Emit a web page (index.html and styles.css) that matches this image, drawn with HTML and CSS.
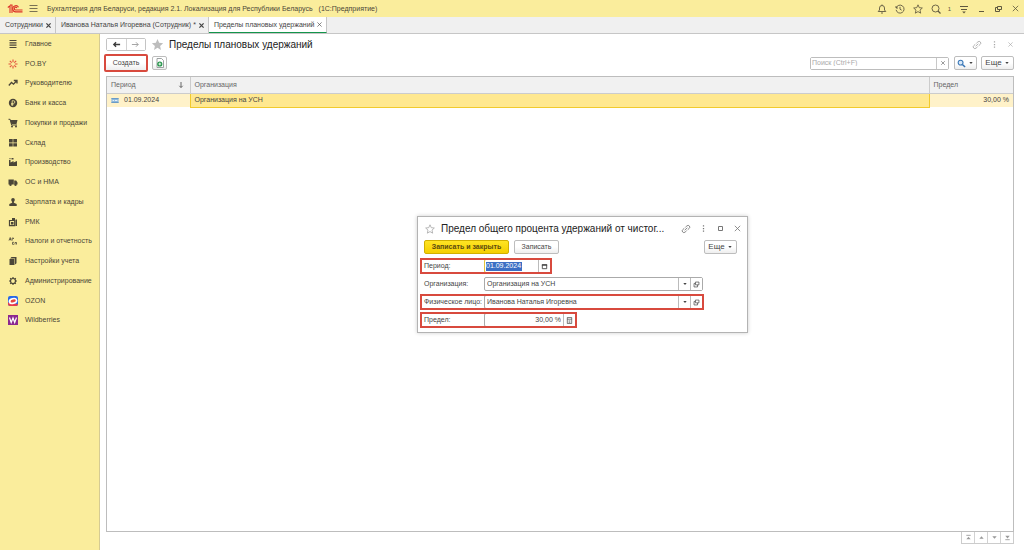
FILE: index.html
```html
<!DOCTYPE html>
<html lang="ru">
<head>
<meta charset="utf-8">
<title>Пределы плановых удержаний</title>
<link rel="stylesheet" href="styles.css">
</head>
<body>
<svg class="defs" aria-hidden="true">
  <symbol id="link" viewBox="0 0 10 10"><g transform="rotate(-42 5 5)" fill="none" stroke="currentColor" stroke-width=".8"><path d="M4.300 3.300H2.200a1.700 1.700 0 0 0 0 3.400h2.100M5.700 3.300h2.100a1.700 1.700 0 0 1 0 3.400H5.700M3.200 5h3.600"/></g></symbol>
  <symbol id="dots" viewBox="0 0 10 10"><path d="M4.300 1.500h1.400v1.400H4.300zM4.300 4.400h1.400v1.400H4.300zM4.300 7.300h1.400v1.400H4.300z" fill="currentColor"/></symbol>
  <symbol id="cross" viewBox="0 0 10 10"><path d="M2 2l6 6M8 2l-6 6" stroke="currentColor" stroke-width=".9" fill="none"/></symbol>
  <symbol id="bold-cross" viewBox="0 0 10 10"><path d="M2 2l6 6M8 2l-6 6" stroke="currentColor" stroke-width="1.800" fill="none"/></symbol>
  <symbol id="star" viewBox="0 0 12 12"><path d="M6 1l1.500 3.400 3.700.4-2.800 2.500.8 3.700L6 9.100 2.800 11l.8-3.700L.8 4.800l3.700-.4z"/></symbol>
  <symbol id="caret" viewBox="0 0 6 6"><path d="M1.300 2h3.400L3 4z" fill="currentColor"/></symbol>
  <symbol id="open" viewBox="0 0 10 10"><path d="M3.500 1.500h5v4h-5zM3.500 3.500h-2v5h5v-3" fill="none" stroke="currentColor"/></symbol>
</svg>

<header class="topbar">
  <svg class="logo" viewBox="0 0 16 10"><g fill="none" stroke="#dc2f27" stroke-width="1.100"><path d="M.8 3.500L3 1.800V9M5 9V1H3"/><path d="M11.500 3.300A3.100 3.100 0 1 0 9 7.900H15.500M10 4.100A1.400 1.400 0 1 0 9 6H15.500"/></g></svg>
  <button class="plain" aria-label="Меню"><svg class="i9" viewBox="0 0 9 9"><path d="M.5 1.500h8M.5 4.500h8M.5 7.500h8" stroke="#7a7254" fill="none"/></svg></button>
  <span class="app-title">Бухгалтерия для Беларуси, редакция 2.1. Локализация для Республики Беларусь</span>
  <span>(1С:Предприятие)</span>
  <nav class="top-tools">
    <button class="plain" aria-label="Уведомления"><svg class="i10" viewBox="0 0 10 10"><path d="M1.200 7.500h7.600L7.500 6V4a2.500 2.500 0 0 0-5 0v2zM4 9h2M5 .5v1" fill="none" stroke="currentColor" stroke-width=".9"/></svg></button>
    <button class="plain" aria-label="История"><svg class="i10" viewBox="0 0 10 10"><path d="M1 2v2h2M1.200 4a4 4 0 1 1-.1 1.800M5 2.800V5.200l1.700 1" fill="none" stroke="currentColor" stroke-width=".9"/></svg></button>
    <button class="plain" aria-label="Избранное"><svg class="i10 star-line"><use href="#star"/></svg></button>
    <button class="plain search-count" aria-label="Поиск"><svg class="i10" viewBox="0 0 10 10"><circle cx="4.500" cy="4.500" r="3.500" fill="none" stroke="currentColor" stroke-width=".9"/><path d="M7 7l2.500 2.500" stroke="currentColor" stroke-width="1.200"/></svg><small>1</small></button>
    <button class="plain" aria-label="Панель"><svg class="i10" viewBox="0 0 10 10"><path d="M1 2.500h8M2 5.500h6" stroke="currentColor" fill="none"/><path d="M3.200 7.500h3.600L5 9.500z" fill="currentColor"/></svg></button>
    <button class="plain" aria-label="Свернуть"><svg class="i9" viewBox="0 0 9 9"><path d="M2 7.500h5" stroke="currentColor"/></svg></button>
    <button class="plain" aria-label="Восстановить"><svg class="i9" viewBox="0 0 9 9"><path d="M3.500 2.500h4v3h-4zM3.500 3.500h-2v4h4v-2" fill="none" stroke="currentColor"/></svg></button>
    <button class="plain" aria-label="Закрыть"><svg class="i9"><use href="#cross"/></svg></button>
  </nav>
</header>

<nav class="tabs">
  <div class="tab"><a href="#">Сотрудники</a><button class="plain" aria-label="Закрыть вкладку"><svg class="i7"><use href="#bold-cross"/></svg></button></div>
  <div class="tab"><a href="#">Иванова Наталья Игоревна (Сотрудник) *</a><button class="plain" aria-label="Закрыть вкладку"><svg class="i7"><use href="#bold-cross"/></svg></button></div>
  <div class="tab active"><a href="#">Пределы плановых удержаний</a><button class="plain" aria-label="Закрыть вкладку"><svg class="i7"><use href="#cross"/></svg></button></div>
</nav>

<div class="workspace">
  <nav class="sidebar">
    <ul>
      <li><a href="#"><svg viewBox="0 0 10 10"><path d="M1.500 1.500h7M1.500 3.800h7M1.500 6.200h7M1.500 8.500h7" stroke="currentColor" stroke-width="1.200"/></svg>Главное</a></li>
      <li><a href="#"><svg viewBox="0 0 10 10"><path d="M5 .5v2.700M5 6.800v2.700M.5 5h2.700M6.800 5h2.700M1.800 1.800l1.900 1.900M6.300 6.300l1.900 1.900M8.200 1.800L6.300 3.700M3.700 6.300L1.800 8.200" stroke="#e2503a" stroke-width="1.100"/></svg>PO.BY</a></li>
      <li><a href="#"><svg viewBox="0 0 10 10"><path d="M.8 7.500L3.500 4.500l2 1.700L8.500 3M5.800 2.500H9v3" fill="none" stroke="currentColor" stroke-width="1.300"/></svg>Руководителю</a></li>
      <li><a href="#"><svg viewBox="0 0 10 10"><circle cx="5" cy="5" r="4.200" fill="currentColor"/><path d="M4.200 8V2.700h1.300a1.300 1.300 0 0 1 0 2.700H3M3 6.700h2.500" fill="none" stroke="#faed9c" stroke-width=".8"/></svg>Банк и касса</a></li>
      <li><a href="#"><svg viewBox="0 0 10 10"><path d="M.5 1.300h1.600L3.600 7H9" fill="none" stroke="currentColor"/><path d="M2.200 2h7.300L8.500 6H3.300z" fill="currentColor"/><circle cx="4" cy="8.500" r="1" fill="currentColor"/><circle cx="8" cy="8.500" r="1" fill="currentColor"/></svg>Покупки и продажи</a></li>
      <li><a href="#"><svg viewBox="0 0 10 10"><path d="M1 1h3.700v3.500H1zM5.300 1H9v3.500H5.300zM1 5.200h3.700V8.500H1zM5.300 5.200H9V8.500H5.300z" fill="currentColor"/></svg>Склад</a></li>
      <li><a href="#"><svg viewBox="0 0 10 10"><path d="M1 9V3h1.500v2.500L5.500 4v1.500L9 4v5zM1.500 1h1v1.300h-1zM3.500 1h2v1.600h-2z" fill="currentColor"/></svg>Производство</a></li>
      <li><a href="#"><svg viewBox="0 0 10 10"><path d="M.5 2.500h5.300v5H.5zM6.200 3.500h2l1.300 2v2H6.200z" fill="currentColor"/><circle cx="2.500" cy="7.700" r="1.200" fill="currentColor"/><circle cx="7.500" cy="7.700" r="1.200" fill="currentColor"/></svg>ОС и НМА</a></li>
      <li><a href="#"><svg viewBox="0 0 10 10"><path d="M3.200 2.800a1.800 1.800 0 0 1 3.600 0c0 1-.6 1.600-.9 2v.9L8.700 7v2H1.300V7l2.800-1.300v-.9c-.3-.4-.9-1-.9-2z" fill="currentColor"/></svg>Зарплата и кадры</a></li>
      <li><a href="#"><svg viewBox="0 0 10 10"><path d="M1.500 3.500h5.200v5.200H1.500z" fill="none" stroke="currentColor" stroke-width="1.200"/><path d="M3 5h2.500v2.500H3zM4 1h3v2H4zM7.500 2.500H9V9H7.500z" fill="currentColor"/></svg>РМК</a></li>
      <li><a href="#"><svg viewBox="0 0 10 10"><path d="M1 4.500L2.200 1.500l1 3M1.500 3.600h1.500M4.200 4.500V2h1.300v1M4.500 6.300H6M4.500 8.300H6M4.500 6.300v2M7 8.500V6.500h1.500v2" fill="none" stroke="currentColor" stroke-width=".8"/></svg>Налоги и отчетность</a></li>
      <li><a href="#"><svg viewBox="0 0 10 10"><path d="M3.500 1h5v6.200L7 8.500V2.500H2zM1.500 3h5v6h-5z" fill="currentColor"/></svg>Настройки учета</a></li>
      <li><a href="#"><svg viewBox="0 0 10 10"><circle cx="5" cy="5" r="2.500" fill="none" stroke="currentColor" stroke-width="1.200"/><path d="M5 1v1.500M5 7.500V9M1 5h1.500M7.500 5H9M2.200 2.200l1 1M6.800 6.800l1 1M7.800 2.200l-1 1M3.200 6.800l-1 1" stroke="currentColor" stroke-width="1.200"/></svg>Администрирование</a></li>
      <li><a href="#"><svg viewBox="0 0 10 10"><rect width="10" height="10" rx="2" fill="#2868e8"/><path d="M0 6.500V8a2 2 0 0 0 2 2h6a2 2 0 0 0 2-2z" fill="#e83b4b"/><ellipse cx="5" cy="5" rx="4.400" ry="3.100" fill="#fff" transform="rotate(-15 5 5)"/><ellipse cx="5.200" cy="5" rx="2.700" ry="1.400" fill="#e6463c" transform="rotate(-15 5 5)"/></svg>OZON</a></li>
      <li><a href="#"><svg viewBox="0 0 10 10"><rect width="10" height="10" fill="#8c2890"/><path d="M1.500 2.500L3.200 7.500 5 3l1.700 4.500L8.500 2.500" fill="none" stroke="#fff" stroke-width="1.200"/></svg>Wildberries</a></li>
    </ul>
  </nav>

  <main class="page">
    <div class="page-head">
      <div class="history">
        <button aria-label="Назад"><svg class="i9" viewBox="0 0 10 10"><path d="M9 5H2M4.500 2.500L2 5l2.500 2.500" fill="none" stroke="#3c3c3c" stroke-width="1.500"/></svg></button>
        <button aria-label="Вперед"><svg class="i9" viewBox="0 0 10 10"><path d="M1 5h7M5.500 2.500L8 5 5.500 7.500" fill="none" stroke="#a4a4a4" stroke-width="1.100"/></svg></button>
      </div>
      <svg class="i13 star-fill"><use href="#star"/></svg>
      <h1>Пределы плановых удержаний</h1>
      <div class="head-tools">
        <button class="plain" aria-label="Ссылка"><svg class="i10"><use href="#link"/></svg></button>
        <button class="plain" aria-label="Действия"><svg class="i9"><use href="#dots"/></svg></button>
        <button class="plain" aria-label="Закрыть"><svg class="i7"><use href="#cross"/></svg></button>
      </div>
    </div>

    <div class="commands">
      <button class="btn create">Создать</button>
      <button class="btn copy" aria-label="Скопировать"><svg class="i10" viewBox="0 0 10 10"><path d="M2 9.500v-9h4.500l2 2v7z" fill="#fff" stroke="#858b8b" stroke-width=".8"/><circle cx="4.800" cy="6" r="2.600" fill="#229447"/><path d="M4.800 4.600v2.800M3.400 6h2.800" stroke="#fff" stroke-width=".9"/></svg></button>
      <div class="search">
        <input type="text" placeholder="Поиск (Ctrl+F)" aria-label="Поиск">
        <button aria-label="Очистить"><svg class="i6"><use href="#cross"/></svg></button>
      </div>
      <button class="btn find" aria-label="Найти"><svg class="i9" viewBox="0 0 10 10"><circle cx="4" cy="4" r="2.700" fill="#d8e8f8" stroke="#3473b5" stroke-width="1.200"/><path d="M6 6l3 3" stroke="#3473b5" stroke-width="1.600"/></svg><svg class="i6"><use href="#caret"/></svg></button>
      <button class="btn more">Еще<svg class="i6"><use href="#caret"/></svg></button>
    </div>

    <div class="list">
      <table>
        <thead><tr><th class="c-date"><span>Период<svg class="sort" viewBox="0 0 6 8"><path d="M3 1v5.500M1.300 4.800L3 6.500l1.700-1.700" fill="none" stroke="currentColor"/></svg></span></th><th>Организация</th><th class="c-limit">Предел</th></tr></thead>
        <tbody><tr><td><span class="rec"><svg viewBox="0 0 10 8"><rect x=".5" y="1" width="9" height="6" fill="#8db8dc"/><path d="M.5 1.500h9M.5 6.500h9" stroke="#5e92c2"/><path d="M2 4h2M5 4h3" stroke="#fff"/></svg>01.09.2024</span></td><td class="current">Организация на УСН</td><td class="num">30,00 %</td></tr></tbody>
      </table>
    </div>
    <div class="pager">
      <button aria-label="В начало"><svg class="i7" viewBox="0 0 8 8"><path d="M1.500 1.500h5" stroke="currentColor"/><path d="M1.500 6L4 3l2.500 3z" fill="currentColor"/></svg></button>
      <button aria-label="Вверх"><svg class="i7" viewBox="0 0 8 8"><path d="M1.500 5.500L4 2.500l2.500 3z" fill="currentColor"/></svg></button>
      <button aria-label="Вниз"><svg class="i7" viewBox="0 0 8 8"><path d="M1.500 2.500h5L4 5.500z" fill="currentColor"/></svg></button>
      <button aria-label="В конец"><svg class="i7" viewBox="0 0 8 8"><path d="M1.500 2h5L4 5z" fill="currentColor"/><path d="M1.500 6.500h5" stroke="currentColor"/></svg></button>
    </div>
  </main>
</div>

<section class="dialog" role="dialog" aria-labelledby="dialog-title">
  <div class="dialog-head">
    <svg class="i10 star-line"><use href="#star"/></svg>
    <h2 id="dialog-title">Предел общего процента удержаний от чистог...</h2>
    <button class="plain" aria-label="Ссылка"><svg class="i10"><use href="#link"/></svg></button>
    <button class="plain" aria-label="Действия"><svg class="i9"><use href="#dots"/></svg></button>
    <button class="plain" aria-label="Развернуть"><svg class="i9" viewBox="0 0 9 9"><path d="M2.500 2.500h4v4h-4z" fill="none" stroke="currentColor"/></svg></button>
    <button class="plain" aria-label="Закрыть"><svg class="i9"><use href="#cross"/></svg></button>
  </div>
  <div class="dialog-commands">
    <button class="btn primary">Записать и закрыть</button>
    <button class="btn save">Записать</button>
    <button class="btn more">Еще<svg class="i6"><use href="#caret"/></svg></button>
  </div>
  <form>
    <div class="row marked">
      <label for="period">Период:</label>
      <div class="field focus"><span class="input-wrap"><input class="w-date" id="period" type="text" value="01.09.2024"></span><button type="button" aria-label="Календарь"><svg class="i7" viewBox="0 0 8 8"><path d="M1.500 2h5v4.500h-5z" fill="#fff" stroke="currentColor"/><path d="M1 2.300h6" stroke="currentColor" stroke-width="1.500"/></svg></button></div>
    </div>
    <div class="row">
      <label for="org">Организация:</label>
      <div class="field"><input class="w-ref" id="org" type="text" value="Организация на УСН"><button type="button" aria-label="Выбрать"><svg class="i6"><use href="#caret"/></svg></button><button type="button" aria-label="Открыть"><svg class="i7"><use href="#open"/></svg></button></div>
    </div>
    <div class="row marked">
      <label for="person">Физическое лицо:</label>
      <div class="field"><input class="w-ref" id="person" type="text" value="Иванова Наталья Игоревна"><button type="button" aria-label="Выбрать"><svg class="i6"><use href="#caret"/></svg></button><button type="button" aria-label="Открыть"><svg class="i7"><use href="#open"/></svg></button></div>
    </div>
    <div class="row marked">
      <label for="limit">Предел:</label>
      <div class="field"><input class="w-num" id="limit" type="text" value="30,00 %"><button type="button" aria-label="Калькулятор"><svg class="i7" viewBox="0 0 8 8"><path d="M1.500.5h5v7h-5zM1.500 2.500h5M3 4.500h2M3 6h2" fill="none" stroke="currentColor" stroke-width=".8"/></svg></button></div>
    </div>
  </form>
</section>
</body>
</html>
```
FILE: styles.css
```css
* { box-sizing: border-box; }
body {
  margin: 0;
  min-height: 100vh;
  display: flex;
  flex-direction: column;
  background: #fff;
  color: #444;
  font: 7px/10px "Liberation Sans", Arial, sans-serif;
}
button, input { font: inherit; color: inherit; margin: 0; padding: 0; }
button { display: flex; align-items: center; justify-content: center; }
a { color: inherit; text-decoration: none; }
svg { display: block; flex: none; }
h1, h2 { margin: 0; font-weight: 400; color: #222; }
.defs { position: absolute; width: 0; height: 0; }
.plain { border: 0; background: none; }
.i6 { width: 6px; height: 6px; }
.i7 { width: 7px; height: 7px; }
.i9 { width: 9px; height: 9px; }
.i10 { width: 10px; height: 10px; }
.i13 { width: 13px; height: 13px; }
.star-line { fill: none; stroke: currentColor; }
.star-fill { fill: #bdbdbd; }

.topbar {
  height: 17px;
  display: flex;
  align-items: center;
  padding: 0 4px 0 7px;
  background: #faed9c;
  color: #4b4638;
}
.logo { width: 16px; height: 10px; margin-right: 6px; }
.app-title { margin: 0 6px 0 9px; }
.top-tools { margin-left: auto; display: flex; gap: 8px; color: #5f583f; }
.search-count { gap: 7px; }
.search-count small { font-size: 6px; }

.tabs { height: 17px; display: flex; background: #f0f0f0; border-bottom: 1px solid #c6c6c6; }
.tab {
  display: flex;
  align-items: center;
  gap: 2px;
  padding: 0 3px 0 5px;
  border-right: 1px solid #c6c6c6;
}
.tab.active { padding-left: 5px; background: #fff; border-bottom: 1px solid #13954b; }

.workspace { flex: 1; display: flex; }
.sidebar { width: 100px; background: #faed9c; border-right: 1px solid #d5cb93; }
.sidebar ul {
  height: 296px;
  margin: 0;
  padding: 0;
  list-style: none;
  display: flex;
  flex-direction: column;
}
.sidebar li { flex: 1; min-height: 0; }
.sidebar a { display: flex; align-items: center; gap: 7px; height: 20px; padding-left: 8px; color: #4b4638; }
.sidebar svg { width: 10px; height: 10px; }

.page { flex: 1; min-width: 0; display: flex; flex-direction: column; padding: 3px 10px 6px 6px; }
.page-head { display: flex; align-items: center; height: 15px; }
.history { display: flex; width: 40px; height: 13px; border: 1px solid #c4c4c4; border-radius: 2px; margin-right: 5px; }
.history button { flex: 1; border: 0; background: #fff; }
.history button + button { border-left: 1px solid #d2d2d2; }
h1 { font-size: 10px; line-height: 14px; margin-left: 5px; }
.head-tools { margin-left: auto; display: flex; gap: 8px; color: #a5a5a5; }

.commands { display: flex; align-items: center; margin: 2px 0 4px; height: 18px; }
.btn {
  height: 14px;
  border: 1px solid #bdbdbd;
  border-radius: 2px;
  background: linear-gradient(#fff 50%, #eee);
}
.create { width: 44px; height: 18px; margin-left: -2px; border: 2px solid #d84a3e; }
.copy { width: 15px; margin-left: 4px; }
.search { margin-left: auto; display: flex; width: 139px; height: 13px; border: 1px solid #bdbdbd; border-radius: 2px; }
.search input { flex: 1; min-width: 0; border: 0; padding-left: 1px; }
.search input::placeholder { color: #aaa; }
.search button { width: 12px; border: 0; border-left: 1px solid #c8c8c8; background: #fff; }
.find { width: 23px; gap: 2px; margin: 0 4px 0 5px; }
.more { width: 33px; gap: 2px; font-size: 8px; }

.list { flex: 1; border: 1px solid #bdbdbd; }
table { width: 100%; border-collapse: collapse; table-layout: fixed; }
th { height: 16px; padding: 0 4px; text-align: left; font-weight: 400; background: #f1f1f1; color: #666; border-bottom: 1px solid #ccc; }
th + th { border-left: 1px solid #ccc; }
th span { display: flex; align-items: center; justify-content: space-between; padding-right: 2px; }
.sort { width: 6px; height: 8px; }
.c-date { width: 83px; }
.c-limit { width: 84px; }
td { height: 14px; padding: 0 4px; background: #fff2c9; }
td.current { background: #ffe890; border: 1px solid #f1ca2e; }
.num { text-align: right; }
.rec { display: flex; align-items: center; gap: 5px; }
.rec svg { width: 8px; height: 7px; }
.pager { align-self: flex-end; display: flex; height: 12px; border: 1px solid #ccc; border-top: 0; }
.pager button { width: 12px; border: 0; background: #fff; color: #999; }
.pager button + button { width: 13px; border-left: 1px solid #d2d2d2; }

.dialog {
  position: absolute;
  left: 417px;
  top: 216px;
  width: 331px;
  padding: 4px 3px 4px 2px;
  background: #fff;
  border: 1px solid #b3b3b3;
  box-shadow: 0 0 4px #0003;
}
.dialog-head { display: flex; align-items: center; gap: 8px; height: 15px; padding: 0 2px 0 5px; color: #777; }
.dialog-head .star-line { stroke: #aaa; }
h2 { flex: 1; font-size: 10px; line-height: 14px; margin-left: -2px; white-space: nowrap; }
.dialog-commands { display: flex; gap: 5px; margin: 4px 7px 4px 4px; }
.primary { width: 85px; font-weight: 700; color: #5c4b10; border-color: #d1b000; background: linear-gradient(#ffe424, #f5cf00); }
.save { width: 45px; }
.dialog-commands .more { margin-left: auto; }
form { display: flex; flex-direction: column; align-items: flex-start; gap: 2px; }
.row { display: flex; align-items: center; height: 16px; padding: 0 1px 0 4px; position: relative; }
.row label { width: 60px; white-space: nowrap; }
.marked::after { content: ""; position: absolute; inset: 0; border: 2px solid #d84a3e; pointer-events: none; }
.field { display: flex; height: 14px; border: 1px solid #aaa; border-radius: 2px; }
.field input { border: 0; padding: 0 2px; background: none; outline: 0; }
.field button { width: 12px; border: 0; border-left: 1px solid #bbb; background: #fff; }
.field.focus { border-color: #e3c43c; }
.w-date { width: 36px; height: 9px; color: #fff; }
.input-wrap { display: flex; align-items: center; width: 53px; padding-left: 1px; }
.input-wrap .w-date { padding: 0; background: #3b6fc4; }
.w-ref { width: 193px; }
.w-num { width: 78px; text-align: right; }
```
